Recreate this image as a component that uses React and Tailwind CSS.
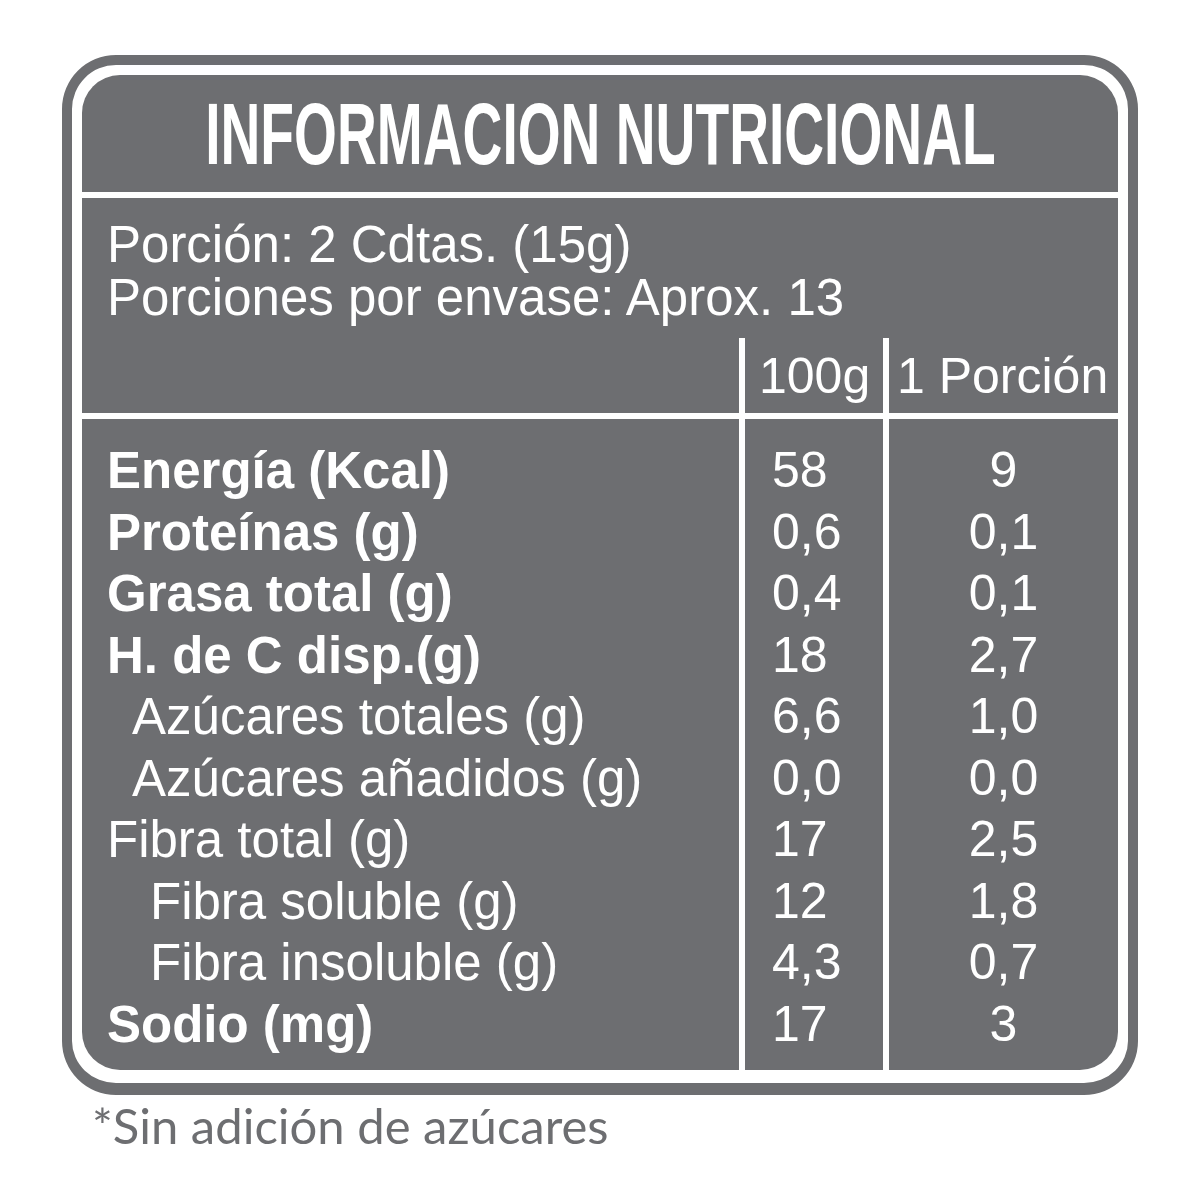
import React from "react";

const rows = [
  { label: "Energía (Kcal)", bold: true, indent: "pl-[25px]", a: "58", b: "9" },
  { label: "Proteínas (g)", bold: true, indent: "pl-[25px]", a: "0,6", b: "0,1" },
  { label: "Grasa total (g)", bold: true, indent: "pl-[25px]", a: "0,4", b: "0,1" },
  { label: "H. de C disp.(g)", bold: true, indent: "pl-[25px]", a: "18", b: "2,7" },
  { label: "Azúcares totales (g)", bold: false, indent: "pl-[50px]", a: "6,6", b: "1,0" },
  { label: "Azúcares añadidos (g)", bold: false, indent: "pl-[50px]", a: "0,0", b: "0,0" },
  { label: "Fibra total (g)", bold: false, indent: "pl-[25px]", a: "17", b: "2,5" },
  { label: "Fibra soluble (g)", bold: false, indent: "pl-[68px]", a: "12", b: "1,8" },
  { label: "Fibra insoluble (g)", bold: false, indent: "pl-[68px]", a: "4,3", b: "0,7" },
  { label: "Sodio (mg)", bold: true, indent: "pl-[25px]", a: "17", b: "3" },
];

const App = () => {
  return (
    <div className="w-[1200px] h-[1200px] bg-white pt-[55px] font-['Liberation_Sans',Arial,sans-serif] text-white">
      <div className="ml-[62px] w-[1076px] h-[1040px] rounded-[54px] border-[10px] border-b-[12px] border-[#6d6e71] p-[10px] pb-[13px]">
        <div className="h-full rounded-[38px] bg-[#6d6e71] flex flex-col overflow-hidden">
          {/* title */}
          <div className="h-[117px] flex items-center justify-center">
            <h1 className="font-bold text-[87px] leading-none scale-x-[0.634] whitespace-nowrap">
              INFORMACION NUTRICIONAL
            </h1>
          </div>
          <div className="h-[6px] bg-white" />

          {/* serving info */}
          <div className="h-[140px] pt-[20px] pl-[25px] text-[51px] leading-[53px] whitespace-nowrap">
            <p>Porción: 2 Cdtas. (15g)</p>
            <p>Porciones por envase: Aprox. 13</p>
          </div>

          {/* column heads */}
          <div className="flex h-[75px] text-[50px] leading-[50px]">
            <div className="w-[657px]" />
            <div className="w-[144px] border-l-[6px] border-white flex items-end pb-[12px] pl-[14px]">
              100g
            </div>
            <div className="flex-1 border-l-[6px] border-white flex items-end pb-[12px] pl-[8px] whitespace-nowrap">
              1 Porción
            </div>
          </div>
          <div className="h-[6px] bg-white" />

          {/* body */}
          <div className="flex flex-1 text-[51px] leading-[61.5px]">
            <div className="w-[657px] pt-[21px]">
              {rows.map((r, i) => (
                <div key={i} className={`${r.indent} ${r.bold ? "font-bold" : ""} whitespace-nowrap`}>
                  {r.label}
                </div>
              ))}
            </div>
            <div className="w-[144px] border-l-[6px] border-white pt-[21px] pl-[27px] text-[50px]">
              {rows.map((r, i) => (
                <div key={i}>{r.a}</div>
              ))}
            </div>
            <div className="flex-1 border-l-[6px] border-white pt-[21px] text-center text-[50px]">
              {rows.map((r, i) => (
                <div key={i}>{r.b}</div>
              ))}
            </div>
          </div>
        </div>
      </div>

      <p className="ml-[92px] text-[#6d6e71] text-[49px] leading-[60px] font-['Lato',sans-serif]">
        *Sin adición de azúcares
      </p>
    </div>
  );
};

export default App;
